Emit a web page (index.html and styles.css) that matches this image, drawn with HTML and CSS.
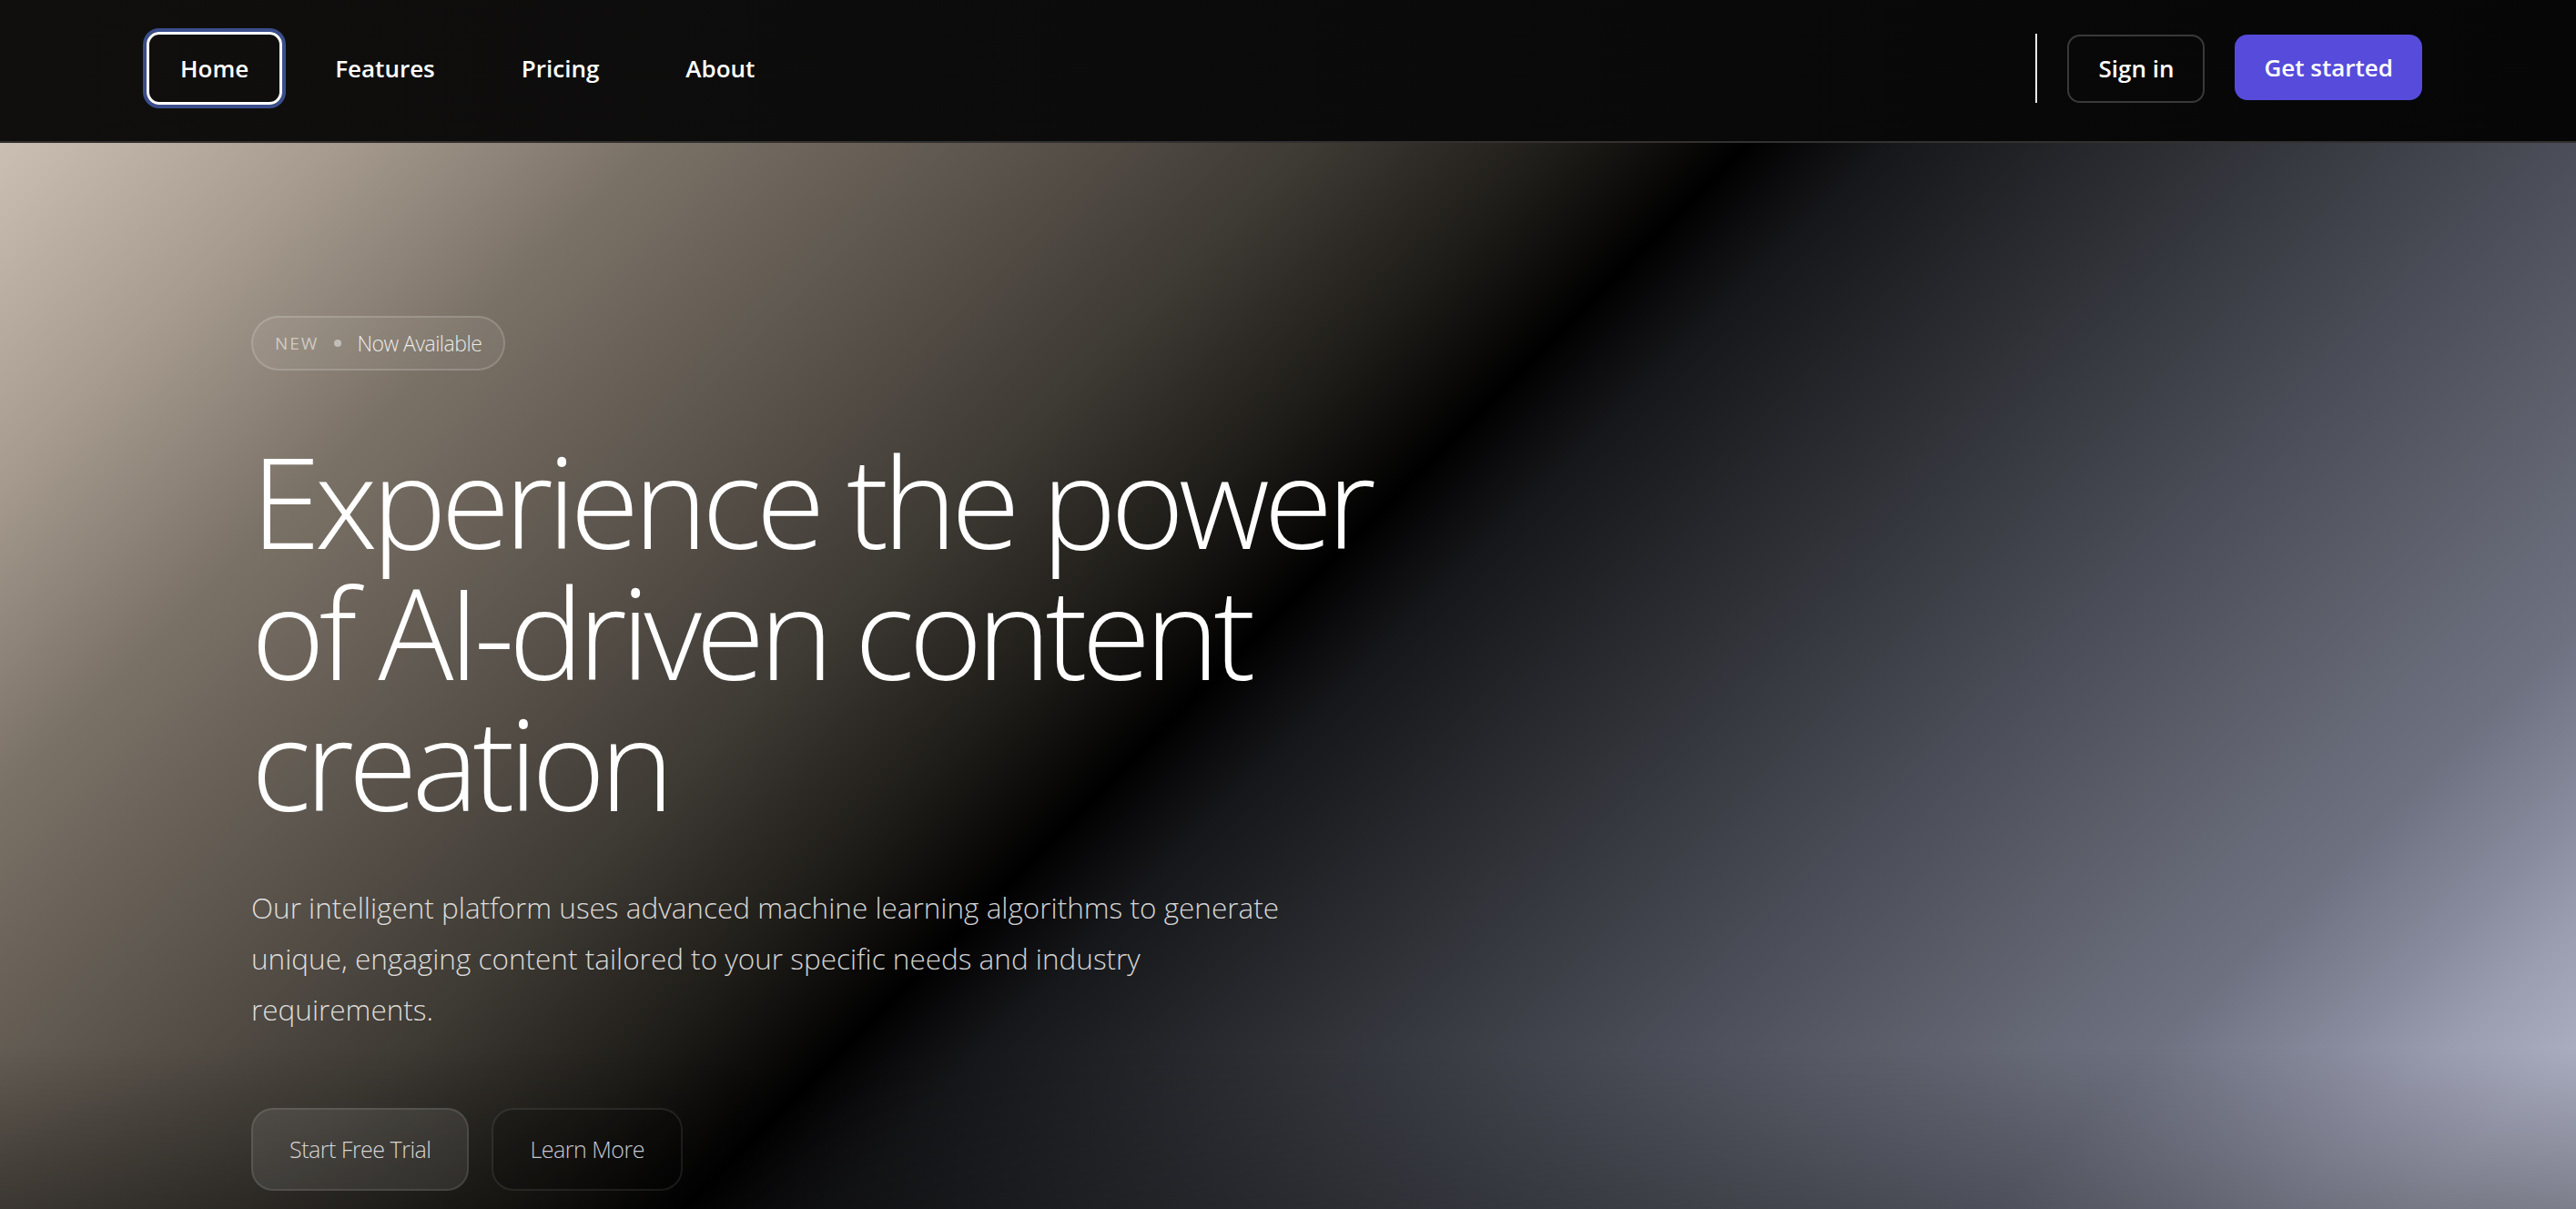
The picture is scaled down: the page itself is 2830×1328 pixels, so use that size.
FILE: index.html
```html
<!DOCTYPE html>
<html lang="en">
<head>
<meta charset="utf-8">
<title>AI Content Platform</title>
<link rel="stylesheet" href="styles.css">
</head>
<body>
<header class="site-header">
  <nav class="nav-inner">
    <ul class="nav-links">
      <li><a class="nav-link is-active" href="#">Home</a></li>
      <li><a class="nav-link" href="#">Features</a></li>
      <li><a class="nav-link" href="#">Pricing</a></li>
      <li><a class="nav-link" href="#">About</a></li>
    </ul>
    <div class="nav-actions">
      <span class="nav-divider"></span>
      <a class="btn-signin" href="#">Sign in</a>
      <a class="btn-primary" href="#">Get started</a>
    </div>
  </nav>
</header>
<main class="hero">
  <div class="hero-content">
    <div class="badge">
      <span class="badge-tag">NEW</span>
      <span class="badge-dot"></span>
      <span class="badge-text">Now Available</span>
    </div>
    <h1 class="hero-title">Experience the power<br>of AI-driven content<br>creation</h1>
    <p class="hero-text">Our intelligent platform uses advanced machine learning algorithms to generate unique, engaging content tailored to your specific needs and industry requirements.</p>
    <div class="hero-actions">
      <a class="btn-trial" href="#">Start Free Trial</a>
      <a class="btn-learn" href="#">Learn More</a>
    </div>
  </div>
</main>
</body>
</html>
```
FILE: styles.css
```css
* { box-sizing: border-box; }
html, body { margin: 0; padding: 0; height: 100%; }
body {
  font-family: "Open Sans", "Noto Sans", sans-serif;
  background: #000;
  color: #fff;
  overflow: hidden;
  display: flex;
  flex-direction: column;
}
a { text-decoration: none; color: inherit; }

.site-header {
  height: 157px;
  flex: none;
  background: linear-gradient(to right, #100f0e, #060607);
  border-bottom: 2px solid #333130;
}
.nav-inner {
  height: 100%;
  padding: 0 169px 5px 161px;
  display: flex;
  align-items: center;
  justify-content: space-between;
}
.nav-links {
  list-style: none;
  margin: 0;
  padding: 0;
  display: flex;
  align-items: center;
  gap: 21px;
}
.nav-link {
  display: block;
  padding: 17px 34px;
  border: 3px solid transparent;
  border-radius: 14px;
  font-size: 26px;
  font-weight: 600;
  line-height: 40px;
  color: #fff;
}
.nav-link.is-active {
  border-color: #fff;
  box-shadow: 0 0 0 4px #3b4e8c;
}
.nav-actions {
  display: flex;
  align-items: center;
  gap: 33px;
}
.nav-divider {
  width: 2px;
  height: 76px;
  background: #e8e8e8;
}
.btn-signin {
  display: block;
  padding: 15px 32px;
  border: 2px solid #393939;
  border-radius: 14px;
  font-size: 26px;
  font-weight: 600;
  line-height: 41px;
}
.btn-primary {
  display: block;
  padding: 16px 32px;
  background: #564bdb;
  border-radius: 14px;
  font-size: 26px;
  font-weight: 600;
  line-height: 40px;
  margin-bottom: 3px;
}

.hero {
  flex: 1;
  background:
    linear-gradient(to top, rgba(0,0,0,0.3), rgba(0,0,0,0) 178px),
    linear-gradient(135deg,
      #cbbfb3 0%,
      #a89c90 9%,
      #7a7166 18%,
      #5d564e 27%,
      #3e3a34 36%,
      #1e1c18 43%,
      #000000 48%,
      #0c0c0e 50%,
      #16171a 52%,
      #2a2c31 59%,
      #4c4f59 71%,
      #5a5d68 76%,
      #6e7180 84%,
      #888b9d 89%,
      #9a9cb0 92%,
      #a9acbf 95.5%,
      #b2b5c8 100%);
}
.hero-content {
  padding: 190px 0 0 276px;
}
.badge {
  display: inline-flex;
  align-items: center;
  gap: 17px;
  height: 60px;
  padding: 0 24px;
  border: 2px solid rgba(255,255,255,0.16);
  border-radius: 999px;
  background: rgba(255,255,255,0.06);
}
.badge-tag {
  font-size: 19px;
  font-weight: 400;
  letter-spacing: 2px;
  color: rgba(255,255,255,0.55);
}
.badge-dot {
  width: 8px;
  height: 8px;
  border-radius: 50%;
  background: rgba(255,255,255,0.45);
}
.badge-text {
  font-size: 23px;
  font-weight: 300;
  letter-spacing: -0.5px;
  color: rgba(255,255,255,0.85);
}
.hero-title {
  margin: 70px 0 0;
  font-size: 138px;
  line-height: 144px;
  font-weight: 300;
  letter-spacing: -0.045em;
  color: #fff;
}
.hero-text {
  margin: 60px 0 0;
  max-width: 1180px;
  font-size: 31.5px;
  line-height: 56px;
  font-weight: 300;
  color: rgba(255,255,255,0.82);
}
.hero-actions {
  display: flex;
  gap: 25px;
  margin-top: 80px;
}
.btn-trial, .btn-learn {
  display: block;
  height: 91px;
  padding: 0 40px;
  border-radius: 24px;
  font-size: 25px;
  font-weight: 300;
  letter-spacing: -0.5px;
  line-height: 87px;
}
.btn-trial {
  background: rgba(255,255,255,0.09);
  border: 2px solid rgba(255,255,255,0.1);
  color: #d6d6d6;
}
.btn-learn {
  background: rgba(0,0,0,0.15);
  border: 2px solid rgba(255,255,255,0.09);
  color: #c4c8d4;
}
```
